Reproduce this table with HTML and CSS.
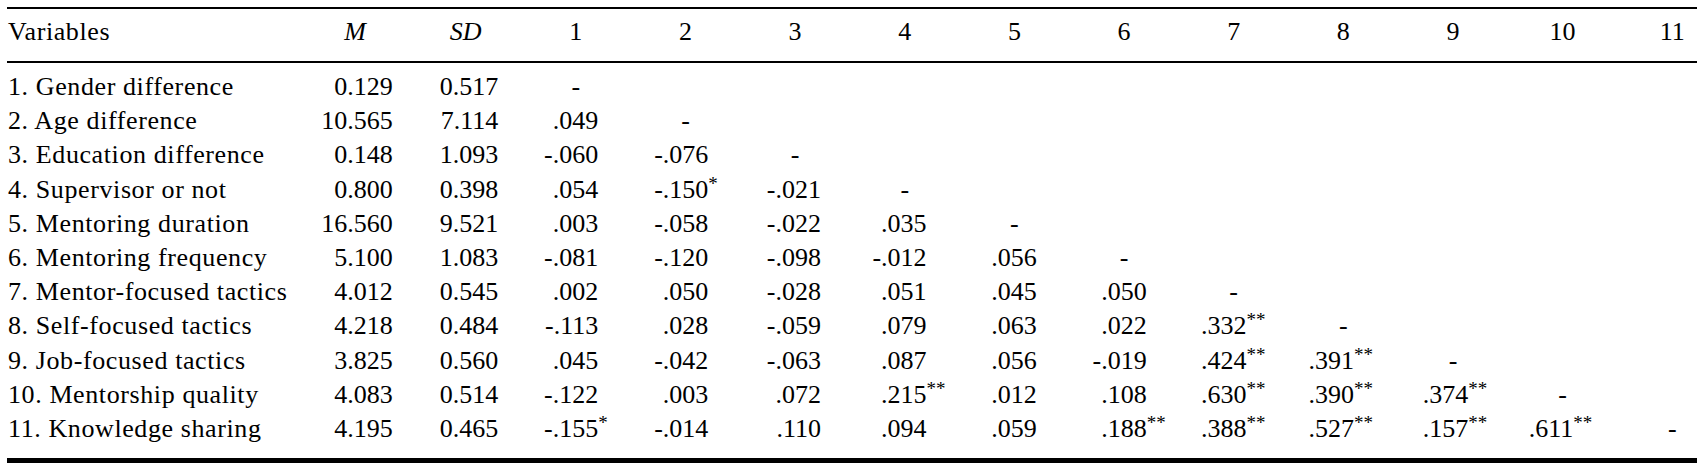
FILE: index.html
```html
<!DOCTYPE html>
<html lang="en">
<head>
    <meta charset="UTF-8">
    <title>Correlation table</title>
    <link rel="stylesheet" href="styles.css">
</head>
<body>

    <!-- means, SDs and correlations of the study variables -->
    <table class="corr">
        <colgroup>
            <col class="c-var">
            <col class="c-m">
            <col class="c-sd">
            <col class="c-n"><col class="c-n"><col class="c-n"><col class="c-n"><col class="c-n">
            <col class="c-n"><col class="c-n"><col class="c-n"><col class="c-n"><col class="c-n">
            <col class="c-last">
        </colgroup>
        <thead>
            <tr>
                <th>Variables</th>
                <th><em>M</em></th>
                <th><em>SD</em></th>
                <th>1</th><th>2</th><th>3</th><th>4</th><th>5</th><th>6</th>
                <th>7</th><th>8</th><th>9</th><th>10</th><th>11</th>
            </tr>
        </thead>
        <tbody>
            <tr>
                <td>1. Gender difference</td><td>0.129</td><td>0.517</td>
                <td class="dash">-</td>
            </tr>
            <tr>
                <td>2. Age difference</td><td>10.565</td><td>7.114</td>
                <td>.049</td><td class="dash">-</td>
            </tr>
            <tr>
                <td>3. Education difference</td><td>0.148</td><td>1.093</td>
                <td>-.060</td><td>-.076</td><td class="dash">-</td>
            </tr>
            <tr>
                <td>4. Supervisor or not</td><td>0.800</td><td>0.398</td>
                <td>.054</td><td>-.150<sup>*</sup></td><td>-.021</td><td class="dash">-</td>
            </tr>
            <tr>
                <td>5. Mentoring duration</td><td>16.560</td><td>9.521</td>
                <td>.003</td><td>-.058</td><td>-.022</td><td>.035</td><td class="dash">-</td>
            </tr>
            <tr>
                <td>6. Mentoring frequency</td><td>5.100</td><td>1.083</td>
                <td>-.081</td><td>-.120</td><td>-.098</td><td>-.012</td><td>.056</td><td class="dash">-</td>
            </tr>
            <tr>
                <td>7. Mentor-focused tactics</td><td>4.012</td><td>0.545</td>
                <td>.002</td><td>.050</td><td>-.028</td><td>.051</td><td>.045</td><td>.050</td><td class="dash">-</td>
            </tr>
            <tr>
                <td>8. Self-focused tactics</td><td>4.218</td><td>0.484</td>
                <td>-.113</td><td>.028</td><td>-.059</td><td>.079</td><td>.063</td><td>.022</td>
                <td>.332<sup>**</sup></td><td class="dash">-</td>
            </tr>
            <tr>
                <td>9. Job-focused tactics</td><td>3.825</td><td>0.560</td>
                <td>.045</td><td>-.042</td><td>-.063</td><td>.087</td><td>.056</td><td>-.019</td>
                <td>.424<sup>**</sup></td><td>.391<sup>**</sup></td><td class="dash">-</td>
            </tr>
            <tr>
                <td>10. Mentorship quality</td><td>4.083</td><td>0.514</td>
                <td>-.122</td><td>.003</td><td>.072</td><td>.215<sup>**</sup></td><td>.012</td><td>.108</td>
                <td>.630<sup>**</sup></td><td>.390<sup>**</sup></td><td>.374<sup>**</sup></td><td class="dash">-</td>
            </tr>
            <tr>
                <td>11. Knowledge sharing</td><td>4.195</td><td>0.465</td>
                <td>-.155<sup>*</sup></td><td>-.014</td><td>.110</td><td>.094</td><td>.059</td><td>.188<sup>**</sup></td>
                <td>.388<sup>**</sup></td><td>.527<sup>**</sup></td><td>.157<sup>**</sup></td><td>.611<sup>**</sup></td><td class="dash">-</td>
            </tr>
        </tbody>
    </table>

</body>
</html>
```

FILE: styles.css
```css
body
{
    margin: 0; background-color: #ffffff; color: #000000;
    font-family: "Liberation Serif", "Times New Roman", serif; font-size: 26px;
}

.corr
{
    margin: 7px 0 0 7px; width: 1690px;
    table-layout: fixed; border-collapse: separate; border-spacing: 0;
}

.c-var { width: 293px; }
.c-m { width: 110px; }
.c-sd { width: 111px; }
.c-n { width: 109.65px; }
.c-last { width: 79.5px; }

.corr th, .corr td
{
    padding: 0; line-height: 34.2px; white-space: nowrap; font-weight: normal;
}

.corr th
{
    text-align: center; padding-top: 6px; padding-bottom: 11.8px;
    border-top: 2px solid #000000; border-bottom: 2px solid #000000;
}

.corr th em { font-style: italic; }

.corr td { text-align: right; padding-right: 32.5px; }

.corr th:first-child, .corr td:first-child
{
    text-align: left; padding-left: 1px; padding-right: 0; letter-spacing: 0.6px;
}

/* right edge of the numbers in each column */
.corr td:nth-child(2) { padding-right: 17.3px; }
.corr td:nth-child(3) { padding-right: 22.7px; }
.corr td:nth-child(4) { padding-right: 32.4px; }
.corr td:nth-child(5) { padding-right: 32px; }
.corr td:nth-child(6) { padding-right: 29px; }
.corr td:nth-child(7) { padding-right: 33px; }
.corr td:nth-child(8) { padding-right: 32.5px; }
.corr td:nth-child(9) { padding-right: 32.2px; }
.corr td:nth-child(10) { padding-right: 41.9px; }
.corr td:nth-child(11) { padding-right: 44.2px; }
.corr td:nth-child(12) { padding-right: 39.5px; }
.corr td:nth-child(13) { padding-right: 44.2px; }

.corr td.dash { text-align: center; padding-right: 0; }
.corr th:last-child, .corr td.dash:nth-child(14) { padding-left: 30px; }

.corr tbody tr:first-child td { padding-top: 7px; }
.corr tbody tr:last-child td { padding-bottom: 12px; border-bottom: 5px solid #000000; }

/* significance stars hang past the number */
.corr sup
{
    display: inline-block; width: 0; text-align: left;
    font-size: 19px; line-height: 0; vertical-align: 8px;
}
```
